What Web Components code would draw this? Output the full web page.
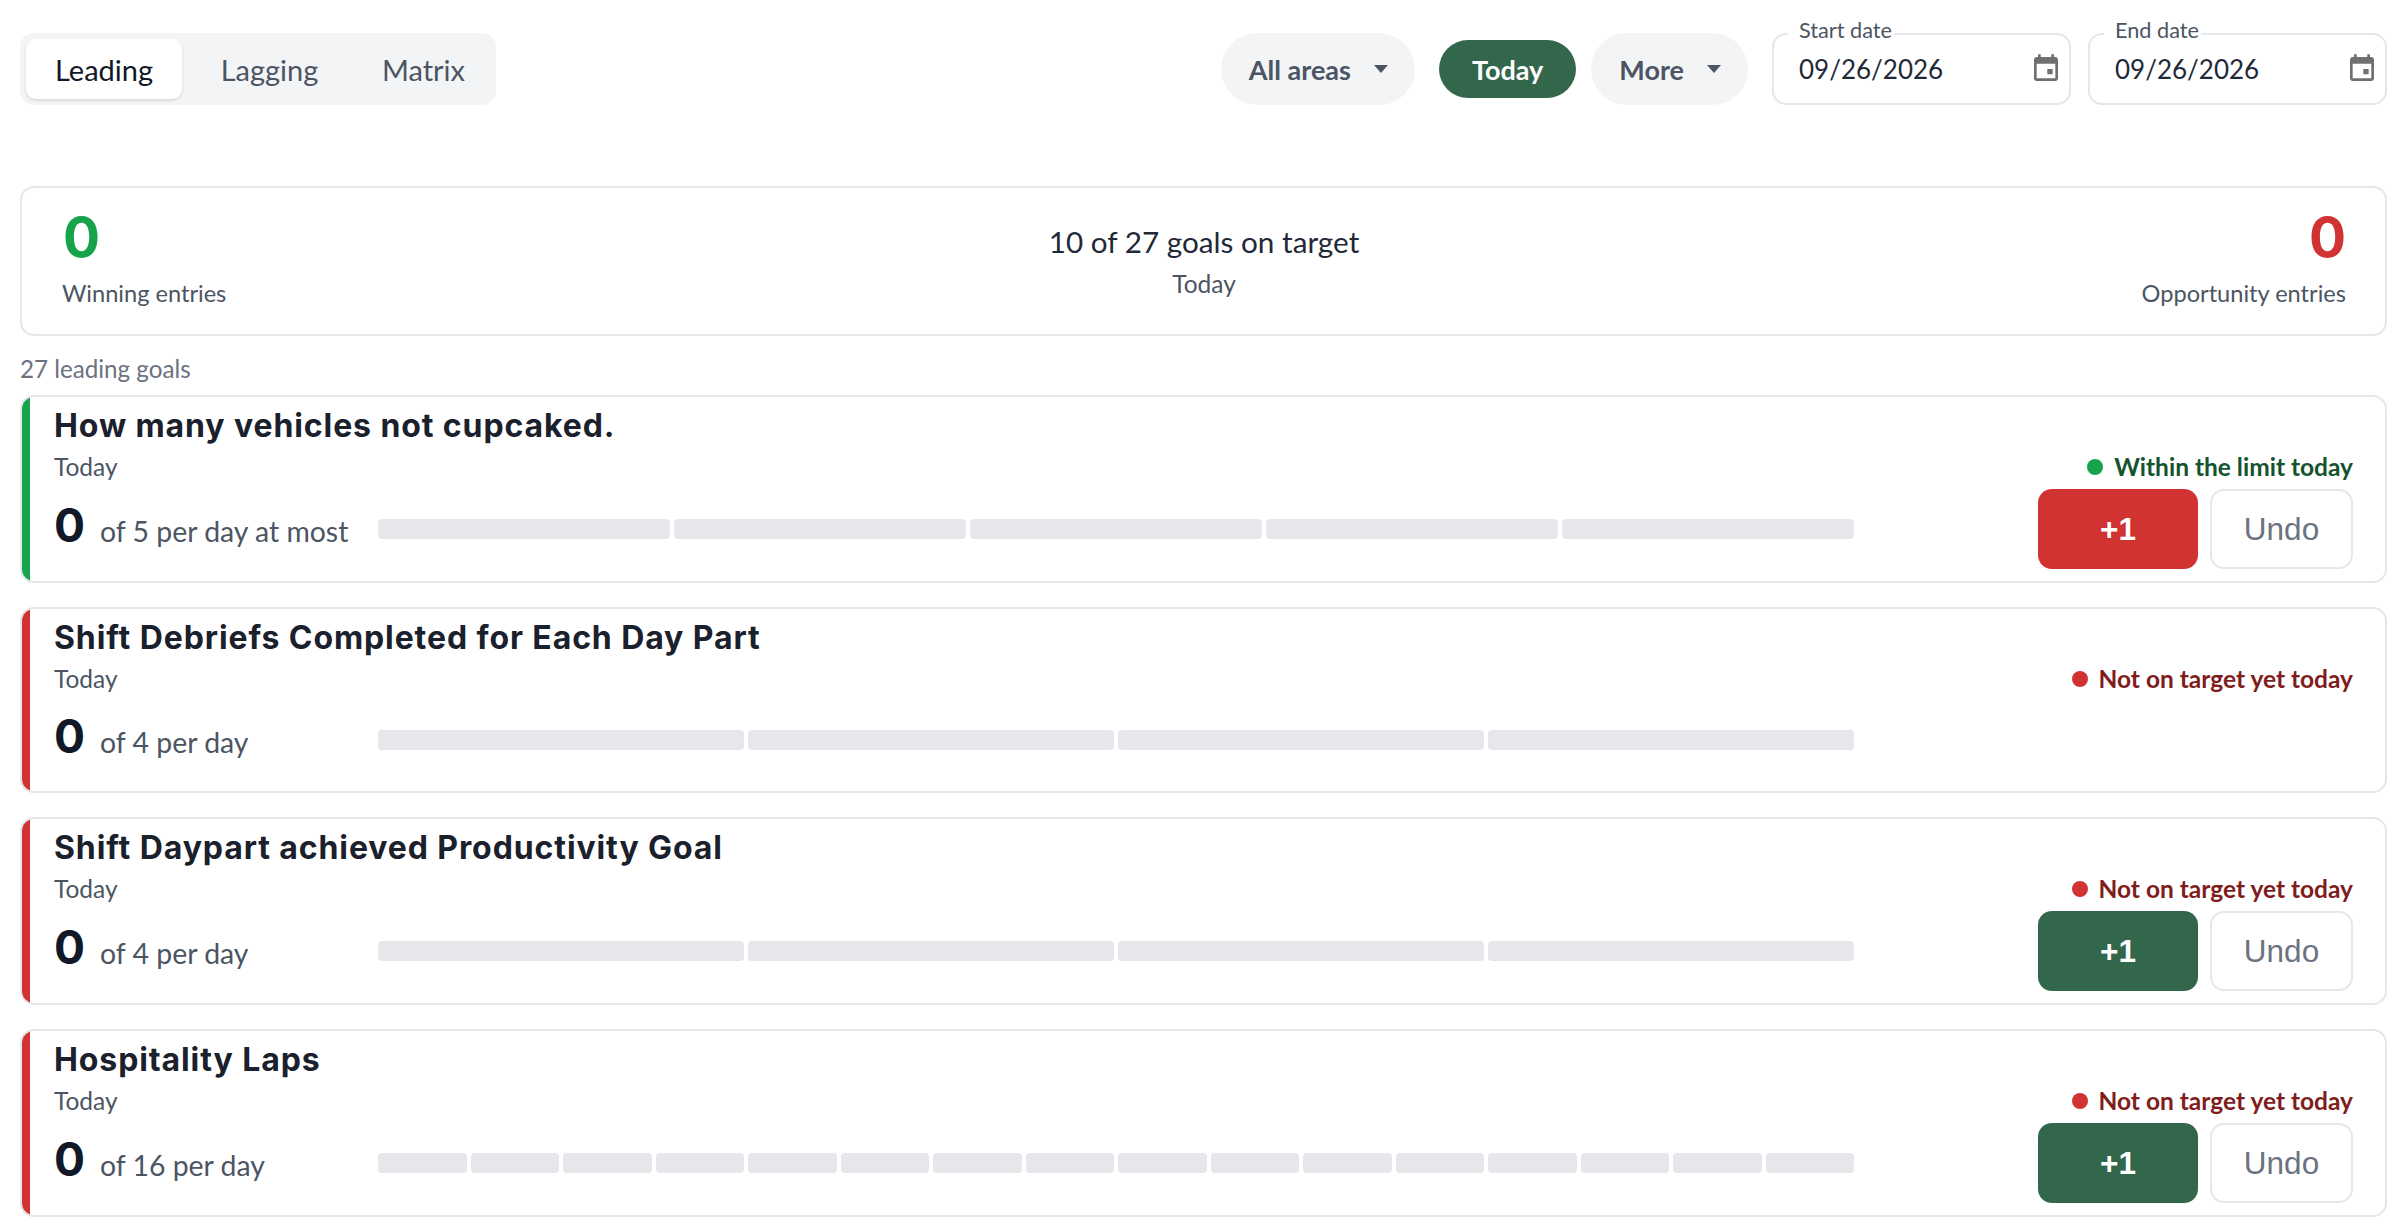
<!DOCTYPE html>
<html lang="en">
<head>
<meta charset="utf-8">
<title>Goals</title>
<style>
  html, body { margin: 0; background: #fff; }
  body { font-family: Lato, "Noto Sans", sans-serif; color: #1f2937; }
</style>
</head>
<body>
<goals-page>
  <goals-toolbar slot="toolbar">
    <tab-switch slot="tabs">
      <tab-item active style="width:156px">Leading</tab-item>
      <tab-item style="width:157px">Lagging</tab-item>
      <tab-item style="width:133px">Matrix</tab-item>
    </tab-switch>
    <filter-pill slot="filters" caret>All areas</filter-pill>
    <filter-pill slot="filters" active>Today</filter-pill>
    <filter-pill slot="filters" caret>More</filter-pill>
    <date-field slot="dates" label="Start date" value="09/26/2026"></date-field>
    <date-field slot="dates" label="End date" value="09/26/2026"></date-field>
  </goals-toolbar>
  <summary-card slot="summary" wins="0" misses="0" heading="10 of 27 goals on target" period="Today"></summary-card>
  <span slot="count">27 leading goals</span>
  <goal-card tone="good" name="How many vehicles not cupcaked." target="of 5 per day at most" segments="5" status="Within the limit today" button="red"></goal-card>
  <goal-card tone="bad" name="Shift Debriefs Completed for Each Day Part" target="of 4 per day" segments="4" status="Not on target yet today"></goal-card>
  <goal-card tone="bad" name="Shift Daypart achieved Productivity Goal" target="of 4 per day" segments="4" status="Not on target yet today" button="green"></goal-card>
  <goal-card tone="bad" name="Hospitality Laps" target="of 16 per day" segments="16" status="Not on target yet today" button="green"></goal-card>
</goals-page>

<script>
const BODY_FONT = 'Lato, "Noto Sans", sans-serif'
const HEAD_FONT = 'Inter, "Noto Sans", sans-serif'

// small helper so each element stays a few lines
function shadow(el, html) {
  const template = document.createElement('template')
  template.innerHTML = html
  el.attachShadow({ mode: 'open' })
  el.shadowRoot.appendChild(template.content.cloneNode(true))
}

class GoalsPage extends HTMLElement {
  constructor() {
    super()
    shadow(this, `
      <style>
        :host { display: block; padding: 33px 20px 0; }
        .count { height: 59px; padding-top: 6px; box-sizing: border-box; display: flex; align-items: center;
          font: 400 24.2px ${BODY_FONT}; color: #6b7280; }
        .list { display: flex; flex-direction: column; gap: 24px; }
        .top { margin-bottom: 81px; }
      </style>
      <div class="top"><slot name="toolbar"></slot></div>
      <slot name="summary"></slot>
      <div class="count"><slot name="count"></slot></div>
      <div class="list"><slot></slot></div>
    `)
  }
}

class GoalsToolbar extends HTMLElement {
  constructor() {
    super()
    shadow(this, `
      <style>
        :host { display: flex; justify-content: space-between; align-items: center; }
        .right { display: flex; align-items: center; gap: 24px; }
        .filters { display: flex; align-items: center; gap: 20px; }
        .dates { display: flex; gap: 17px; }
      </style>
      <slot name="tabs"></slot>
      <div class="right">
        <div class="filters"><slot name="filters"></slot></div>
        <div class="dates"><slot name="dates"></slot></div>
      </div>
    `)
  }
}

class TabSwitch extends HTMLElement {
  constructor() {
    super()
    shadow(this, `
      <style>
        :host { display: flex; gap: 9px; padding: 6px; background: #f3f4f6; border-radius: 14px; }
      </style>
      <slot></slot>
    `)
  }
}

class TabItem extends HTMLElement {
  constructor() {
    super()
    shadow(this, `
      <style>
        :host { display: flex; align-items: center; justify-content: center; height: 60px; border-radius: 10px;
          font: 400 29px ${BODY_FONT}; color: #4b5563; }
        :host([active]) { background: #fff; color: #111827; box-shadow: 0 2px 3px rgba(0,0,0,.1); }
      </style>
      <slot></slot>
    `)
  }
}

class FilterPill extends HTMLElement {
  constructor() {
    super()
    const caret = this.hasAttribute('caret')
      ? '<svg class="caret" width="14" height="8" viewBox="0 0 14 8"><path d="M0 0h14L7 8z" fill="#4b5563"/></svg>'
      : ''
    shadow(this, `
      <style>
        :host { display: flex; align-items: center; gap: 23px; height: 72px; padding: 0 27px 0 28px; border-radius: 36px;
          background: #f3f4f6; color: #4b5563; font: 700 27px ${BODY_FONT}; }
        :host([active]) { height: 58px; padding: 0 33px; border-radius: 29px; background: #33674c; color: #fff;
          margin-left: 4px; margin-right: -5px; }
      </style>
      <slot></slot>${caret}
    `)
  }
}

class DateField extends HTMLElement {
  constructor() {
    super()
    shadow(this, `
      <style>
        :host { display: block; position: relative; box-sizing: border-box; width: 299px; height: 72px;
          border: 2px solid #e5e7eb; border-radius: 14px; }
        .label { position: absolute; left: 14px; top: -17px; padding: 0 2px 0 11px; background: #fff;
          font: 400 21.7px/24px ${BODY_FONT}; color: #4b5563; }
        .row { height: 100%; display: flex; align-items: center; justify-content: space-between;
          padding: 0 7px 0 25px; box-sizing: border-box; font: 400 26px ${BODY_FONT}; color: #1f2937; }
        svg { display: block; fill: #6f6f6f; }
      </style>
      <div class="label">${this.getAttribute('label')}</div>
      <div class="row">
        <span>${this.getAttribute('value')}</span>
        <svg width="32" height="32" viewBox="0 0 24 24"><path d="M19 3h-1V1h-2v2H8V1H6v2H5c-1.11 0-1.99.9-1.99 2L3 19c0 1.1.89 2 2 2h14c1.1 0 2-.9 2-2V5c0-1.1-.9-2-2-2zm0 16H5V8h14v11zM13 12h4v4h-4z"/></svg>
      </div>
    `)
  }
}

class SummaryCard extends HTMLElement {
  constructor() {
    super()
    shadow(this, `
      <style>
        :host { display: grid; grid-template-columns: 1fr auto 1fr; box-sizing: border-box; height: 150px; padding: 0 39px 0 40px;
          border: 2px solid #e5e7eb; border-radius: 14px; }
        .side { display: flex; flex-direction: column; align-items: flex-start; padding-top: 19px; }
        .side.end { align-items: flex-end; }
        .num { font: 700 55px/60px ${HEAD_FONT}; margin: 0 1px; }
        .side.end .num { margin-right: 0; }
        .good { color: #16a34a; }
        .bad { color: #d13232; }
        .lbl { margin-top: 11px; font: 400 23.6px/30px ${BODY_FONT}; color: #4b5563; }
        .mid { text-align: center; padding-top: 36px; }
        .head { font: 400 29.7px/36px ${BODY_FONT}; color: #1f2937; }
        .sub { margin-top: 9px; font: 400 24.5px/30px ${BODY_FONT}; color: #4b5563; }
      </style>
      <div class="side">
        <div class="num good">${this.getAttribute('wins')}</div>
        <div class="lbl">Winning entries</div>
      </div>
      <div class="mid">
        <div class="head">${this.getAttribute('heading')}</div>
        <div class="sub">${this.getAttribute('period')}</div>
      </div>
      <div class="side end">
        <div class="num bad">${this.getAttribute('misses')}</div>
        <div class="lbl">Opportunity entries</div>
      </div>
    `)
  }
}

class SegmentBar extends HTMLElement {
  constructor() {
    super()
    const count = Number(this.getAttribute('count'))
    shadow(this, `
      <style>
        :host { display: flex; gap: 4px; }
        i { flex: 1; height: 20px; background: #e5e7eb; border-radius: 4px; }
      </style>
      ${'<i></i>'.repeat(count)}
    `)
  }
}

class GoalCard extends HTMLElement {
  constructor() {
    super()
    const tone = this.getAttribute('tone')
    const button = this.getAttribute('button')
    const actions = button
      ? `<div class="actions"><div class="plus ${button}">+1</div><div class="undo">Undo</div></div>`
      : ''
    shadow(this, `
      <style>
        :host { display: flex; box-sizing: border-box; border: 2px solid #e5e7eb; border-radius: 14px; overflow: hidden; }
        .accent { width: 8px; background: ${tone === 'good' ? '#16a34a' : '#d13232'}; }
        .body { flex: 1; min-width: 0; padding: 7px 32px 12px 24px; }
        .name { font: 700 32px/44px ${HEAD_FONT}; letter-spacing: .9px; color: #1a202c; }
        .line { display: flex; justify-content: space-between; align-items: center; box-sizing: border-box; height: 36px; padding-top: 1px; margin-bottom: 5px; }
        .today { font: 400 24.5px ${BODY_FONT}; color: #4b5563; }
        .status { display: flex; align-items: center; gap: 11px; font: 700 24.5px ${BODY_FONT};
          color: ${tone === 'good' ? '#14532d' : '#7f1d1d'}; }
        .dot { width: 16px; height: 16px; border-radius: 50%; background: ${tone === 'good' ? '#16a34a' : '#d13232'}; }
        .row { display: grid; grid-template-columns: 324px 1476px 1fr; align-items: center; min-height: 78px; }
        .count { display: flex; align-items: baseline; gap: 15px; padding-bottom: 9px; }
        .zero { font: 700 46px ${HEAD_FONT}; color: #111827; }
        .target { font: 400 28.4px ${BODY_FONT}; color: #4b5563; }
        .actions { display: flex; justify-content: flex-end; gap: 12px; font-family: "Liberation Sans", sans-serif; }
        .plus, .undo { box-sizing: border-box; height: 80px; border-radius: 14px; display: flex; align-items: center; justify-content: center; font-size: 31.5px; }
        .plus { width: 160px; color: #fff; font-weight: 700; }
        .plus.red { background: #d13232; }
        .plus.green { background: #33674c; }
        .undo { width: 143px; border: 2px solid #e5e7eb; color: #6b7280; }
      </style>
      <div class="accent"></div>
      <div class="body">
        <div class="name">${this.getAttribute('name')}</div>
        <div class="line">
          <span class="today">Today</span>
          <span class="status"><span class="dot"></span>${this.getAttribute('status')}</span>
        </div>
        <div class="row">
          <div class="count"><span class="zero">0</span><span class="target">${this.getAttribute('target')}</span></div>
          <segment-bar count="${this.getAttribute('segments')}"></segment-bar>
          ${actions}
        </div>
      </div>
    `)
  }
}

customElements.define('goals-page', GoalsPage)
customElements.define('goals-toolbar', GoalsToolbar)
customElements.define('tab-switch', TabSwitch)
customElements.define('tab-item', TabItem)
customElements.define('filter-pill', FilterPill)
customElements.define('date-field', DateField)
customElements.define('summary-card', SummaryCard)
customElements.define('segment-bar', SegmentBar)
customElements.define('goal-card', GoalCard)
</script>
</body>
</html>
